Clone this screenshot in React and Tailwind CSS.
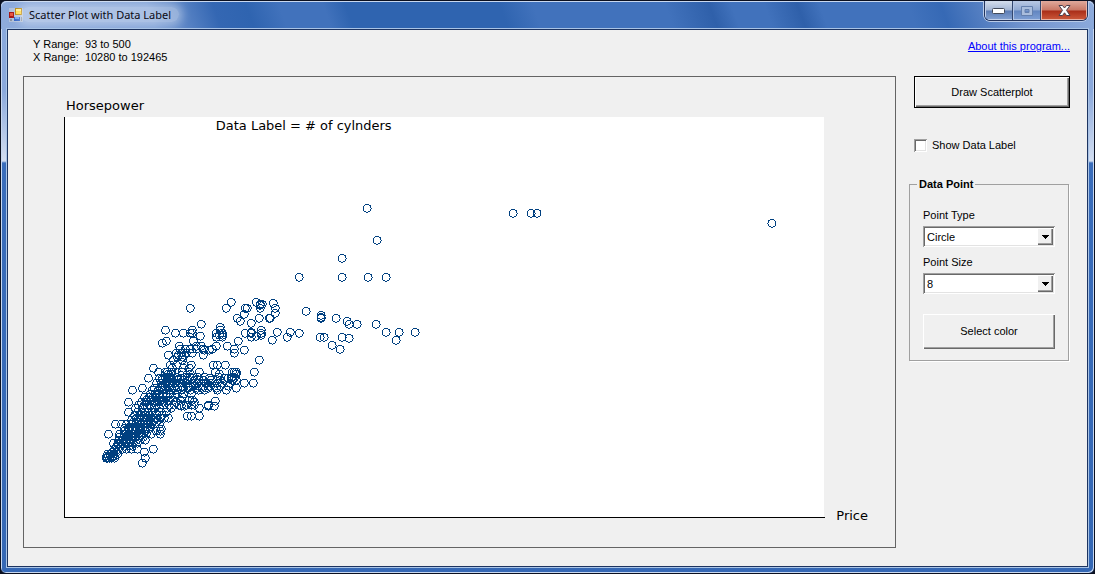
import { useState } from "react";

// Each row holds a vertical position followed by the horizontal positions of its points,
// both in pixels of the 760 x 400 drawing area.
const ROWS = [
  [91, 303], [96, 449, 467, 473], [106, 708], [123, 313], [141, 278],
  [160, 235, 278, 304, 322],
  [185, 167, 192], [186, 209], [187, 196, 198], [188, 196], [191, 126, 162, 181, 183, 196, 211],
  [194, 242], [196, 211], [197, 180], [198, 257], [200, 257], [201, 173, 195, 205, 206, 257],
  [201, 272], [204, 176, 283], [206, 187], [207, 137, 285, 293, 312],
  [210, 156], [213, 101, 128, 156, 197], [215, 213, 226, 322, 335, 351, 187],
  [216, 111, 119, 126, 128, 152, 158, 181, 187, 197, 235], [218, 197, 155, 158],
  [219, 136, 192], [220, 187, 152, 158, 223, 256, 260, 278],
  [221, 285], [223, 332, 208], [224, 102, 129, 174], [226, 98], [228, 268],
  [229, 115, 132, 137, 152, 163], [232, 116, 121, 126, 132, 139, 148, 170, 276],
  [233, 140, 145, 180], [236, 112, 117, 122, 128, 170],
  [238, 104, 114, 120, 139], [240, 113, 118],
  [243, 109, 118, 195], [248, 106, 112, 120, 127, 149, 153, 161],
  [251, 89, 108, 119, 125], [255, 94, 101, 103, 107, 111, 118, 135, 151, 168, 170, 172, 190],
  [257, 104, 107, 126, 155, 172],
  [260, 101, 104, 112, 121, 126, 133, 140, 154, 168],
  [261, 84, 95, 98, 101, 105, 107, 117, 123, 128, 145, 160, 164, 167, 170],
  [263, 98, 103, 107, 113, 119, 124, 130, 135, 139, 147, 156, 168, 172],
  [266, 92, 97, 102, 106, 110, 115, 119, 122, 128, 133, 137, 142, 147, 153, 158, 166, 180, 189],
  [269, 97, 103, 108, 114, 118, 124, 129, 134, 139, 145, 150, 156, 164],
  [271, 78, 90, 96, 100, 105, 110, 119, 124, 133, 138, 144, 152, 172],
  [273, 68, 88, 94, 98, 102, 106, 111, 117, 126, 134, 140, 153, 162],
  [277, 86, 91, 95, 99, 102, 106, 113, 119, 127],
  [280, 80, 85, 89, 92, 96, 99, 102, 106, 111, 118],
  [283, 82, 87, 90, 94, 97, 100, 104, 109, 116, 125, 128],
  [284, 151], [285, 64, 77, 82, 89, 95, 99, 112, 130],
  [288, 74, 80, 86, 92, 99, 105, 110, 115, 122, 127, 130, 144],
  [289, 117, 120, 144, 150],
  [291, 71, 78, 83, 87, 90, 95, 103, 107, 135],
  [295, 64, 73, 78, 81, 84, 88, 91, 95, 102],
  [298, 70, 75, 79, 82, 85, 88, 93, 98],
  [299, 123, 127, 135],
  [301, 72, 76, 80, 83, 87, 92, 96, 100, 104],
  [303, 67, 73, 77, 79, 83, 85, 90, 94],
  [307, 51, 57, 62, 67, 71, 74, 77, 80, 84, 87, 95],
  [305, 69, 75, 81, 86, 92],
  [311, 60, 65, 69, 73, 76, 79, 82, 86],
  [312, 64, 68, 71, 75, 78, 84, 97], [314, 60, 66, 72, 77, 81, 92, 96],
  [317, 44, 55, 60, 64, 67, 70, 74, 77, 82, 87, 96],
  [320, 55, 59, 62, 65, 68, 71, 75, 79],
  [323, 54, 57, 60, 63, 67, 69, 72, 76, 81], [323, 81],
  [326, 49, 54, 58, 62, 65, 69, 73],
  [329, 52, 56, 60, 65, 68], [332, 50, 54, 58, 62, 67, 73, 89],
  [335, 48, 52, 80], [337, 43, 46, 49, 53], [339, 42, 44, 46, 48, 50],
  [341, 42, 43, 45, 47, 50], [340, 43, 48], [346, 78], [341, 81],
];

const EDGE = "shadow-[inset_1px_1px_0_#ffffff,inset_-1px_-1px_0_#696969,inset_-2px_-2px_0_#a0a0a0]";
const SUNKEN = "shadow-[inset_1px_1px_0_#a0a0a0,inset_-1px_-1px_0_#ffffff,inset_2px_2px_0_#696969,inset_-2px_-2px_0_#e3e3e3]";

function AppIcon() {
  return (
    <svg width="14" height="14" viewBox="0 0 14 14" aria-hidden="true">
      <rect width="14" height="14" fill="#c9d0da" opacity=".6" />
      <rect x="6" y="0" width="7" height="7" fill="#b8860b" />
      <rect x="7" y="1" width="5" height="5" fill="#ffd83d" />
      <rect x="7" y="1" width="5" height="2" fill="#ffeb8a" />
      <rect x="0" y="4" width="5" height="6" fill="#a51414" />
      <rect x="1" y="5" width="3" height="3" fill="#e8543c" />
      <rect x="5" y="9" width="6" height="4" fill="#2f62c4" />
      <rect x="6" y="9" width="4" height="2" fill="#6fa4f0" />
      <path d="M1 11h2v2H1zM12 9h1v4h-1z" fill="#8d95a1" />
    </svg>
  );
}

function CaptionButtons() {
  return (
    <div className="flex h-5 self-start overflow-hidden rounded-b-md border border-t-0 border-[#22335c] shadow-[0_1px_0_#b9cbe8,1px_0_0_#b9cbe8,-1px_0_0_#b9cbe8]">
      <button aria-label="Minimize" className="flex w-7 items-center justify-center border-r border-[#33476f] bg-[linear-gradient(180deg,#d5deed_0%,#a3b5d4_48%,#5c7cb4_52%,#86a3d2_100%)] shadow-[inset_1px_-1px_0_#c3d1ea]">
        <svg width="13" height="6" viewBox="0 0 13 6"><rect x=".5" y=".5" width="12" height="5" rx="1" fill="#fff" stroke="#424a5a" /></svg>
      </button>
      <button aria-label="Maximize" className="flex w-7 items-center justify-center border-r border-[#33476f] bg-[linear-gradient(180deg,#b9c9e4_0%,#90a9d2_48%,#6285c0_52%,#7fa0d5_100%)] shadow-[inset_1px_-1px_0_#b3c5e5]">
        <svg width="12" height="10" viewBox="0 0 12 10"><path d="M.5.5h11v9H.5zM4 3.500v3h4v-3z" fill="#a9bddd" stroke="#6580ae" fillRule="evenodd" /></svg>
      </button>
      <button aria-label="Close" className="flex w-[46px] items-center justify-center bg-[linear-gradient(180deg,#dfa99c_0%,#c97866_48%,#a92d18_52%,#cd5a3c_100%)] shadow-[inset_1px_-1px_0_#e8b3a6,inset_-1px_0_0_#e8b3a6]">
        <svg width="13" height="11" viewBox="0 0 13 11"><path d="M1 .5h3.500L6.500 3 8.500.5H12L8.500 5.300 12 10.500H8.500L6.500 7.800 4.500 10.500H1L4.500 5.300z" fill="#fff" stroke="#4a3f4c" /></svg>
      </button>
    </div>
  );
}

function Plot({ color, size, shape }) {
  const r = size / 2;
  return (
    <svg viewBox="0 0 760 400" className="block h-auto w-full bg-white" role="img" aria-label="Horsepower against Price">
      <text x="151" y="13" fontSize="13" fill="#000" fontFamily="'DejaVu Sans', sans-serif">Data Label = # of cylnders</text>
      <g fill="none" stroke={color} strokeWidth="1">
        {ROWS.flatMap(([y, ...xs], i) =>
          xs.map((x, j) =>
            shape === "Circle" ? (
              <circle key={i + "-" + j} cx={x - 0.5} cy={y + 0.5} r={r} shapeRendering="crispEdges" />
            ) : (
              <rect key={i + "-" + j} x={x - r} y={y - r} width={size} height={size} />
            )
          )
        )}
      </g>
    </svg>
  );
}

function Picker({ id, label, value, options, onChange }) {
  return (
    <div className="flex flex-col gap-1">
      <label htmlFor={id} className="leading-[14px]">{label}</label>
      <div className={"grid h-[21px] grid-cols-1 items-center bg-white " + SUNKEN}>
        <select
          id={id}
          value={value}
          onChange={(e) => onChange(e.target.value)}
          className="col-start-1 row-start-1 h-full w-full appearance-none bg-transparent pt-px pr-5 pl-1 outline-none"
        >
          {options.map((o) => <option key={o}>{o}</option>)}
        </select>
        <span className={"pointer-events-none col-start-1 row-start-1 mr-0.5 flex h-[17px] w-4 items-center justify-center justify-self-end bg-[#f0f0f0] " + EDGE}>
          <svg width="7" height="4" viewBox="0 0 7 4" shapeRendering="crispEdges"><path d="M0 0h7v1H0zM1 1h5v1H1zM2 2h3v1H2zM3 3h1v1H3z" /></svg>
        </span>
      </div>
    </div>
  );
}

export default function App() {
  const [shape, setShape] = useState("Circle");
  const [size, setSize] = useState("8");
  const [color, setColor] = useState("#004080");
  const [labels, setLabels] = useState(false);

  return (
    <div className="min-h-screen bg-[#0b1020] font-['Liberation_Sans',Arial,sans-serif] text-[11px] leading-[13px] text-black">
      <div className="flex min-h-screen flex-col rounded-md border border-[#0b1020] bg-[linear-gradient(180deg,#88a8dc_0px,#8ba9dc_90px,#d3def1_160px,#3a6dbb_162px,#3568b5_100%)] px-1.5 pb-1.5 shadow-[inset_1px_1px_0_#c8d8f0,inset_-1px_-1px_0_#c8d8f0]">
        <header className="-mx-1.5 flex h-7 items-center gap-1.5 rounded-t-md bg-[linear-gradient(70deg,#8facdc_0%,#7d9fd6_14%,#3467b3_20%,#2f64b0_23%,#4172bc_26%,#4172bc_30%,#2f64b0_32%,#2f64b0_46%,#4172bc_49%,#4172bc_61%,#2f60aa_65%,#4172bc_67%,#4172bc_70%,#2f60aa_73%,#4172bc_75%,#4172bc_83%,#3669b5_86%,#7395cf_93%,#8facdc_100%)] pr-1.5 pl-2 shadow-[inset_0_1px_0_#c8d8f0]">
          <AppIcon />
          <h1 className="flex-1 font-['Noto_Sans',sans-serif] text-[11px] leading-5 text-[#0a0a14]">
            <span className="-ml-2 rounded-full bg-white/35 px-2 shadow-[0_0_8px_4px_rgba(255,255,255,0.35)]">Scatter Plot with Data Label</span>
          </h1>
          <CaptionButtons />
        </header>

        <main className="flex flex-1 flex-col gap-3 border border-[#1d3461] bg-[#f0f0f0] pt-2 pr-[17px] pb-4 pl-[15px] shadow-[0_0_0_1px_#a9c4e6]">
          <div className="flex justify-between">
            <dl className="grid grid-cols-[auto_1fr] gap-x-1.5 pl-2.5">
              <dt>Y Range:</dt><dd>93 to 500</dd>
              <dt>X Range:</dt><dd>10280 to 192465</dd>
            </dl>
            <a href="#about" className="mt-0.5 text-[#0000ff] underline">About this program...</a>
          </div>

          <div className="flex items-start gap-[13px]">
            <section className="flex-1 border border-[#646464] pt-5 pr-[27px] pb-[29px] pl-10 font-['DejaVu_Sans',sans-serif] text-[13px] leading-4">
              <div className="grid grid-cols-[1fr_auto] gap-x-[11px]">
                <p className="col-span-2 pt-px pb-[3px] pl-0.5">Horsepower</p>
                <div className="border-b border-l border-black pr-px"><Plot color={color} size={Number(size)} shape={shape} /></div>
                <p className="-mb-1.5 self-end">Price</p>
              </div>
            </section>

            <aside className="flex w-[161px] flex-col">
              <button className="ml-[5px] h-8 border border-black bg-[#f0f0f0] shadow-[inset_1px_1px_0_#ffffff,inset_-1px_-1px_0_#696969,inset_-2px_-2px_0_#a0a0a0]">Draw Scatterplot</button>

              <label className="mt-[31px] ml-[5px] flex items-center gap-[5px]">
                <input
                  type="checkbox"
                  checked={labels}
                  onChange={(e) => setLabels(e.target.checked)}
                  className={"size-[13px] appearance-none bg-white checked:bg-[#004080] " + SUNKEN}
                />
                Show Data Label
              </label>

              <fieldset className="mt-[25px] mr-px flex flex-col border border-[#a0a0a0] px-[13px] pb-[11px] shadow-[1px_1px_0_#ffffff]">
                <legend className="-ml-1.5 px-0.5 font-bold leading-[14px]">Data Point</legend>
                <div className="flex flex-col gap-2 pt-[17px]">
                  <Picker id="type" label="Point Type" value={shape} options={["Circle", "Square"]} onChange={setShape} />
                  <Picker id="size" label="Point Size" value={size} options={["4", "6", "8", "10"]} onChange={setSize} />
                </div>
                <button onClick={() => setColor(color === "#004080" ? "#800000" : "#004080")} className={"mt-5 h-[35px] bg-[#f0f0f0] " + EDGE}>Select color</button>
              </fieldset>
            </aside>
          </div>
        </main>
      </div>
    </div>
  );
}
